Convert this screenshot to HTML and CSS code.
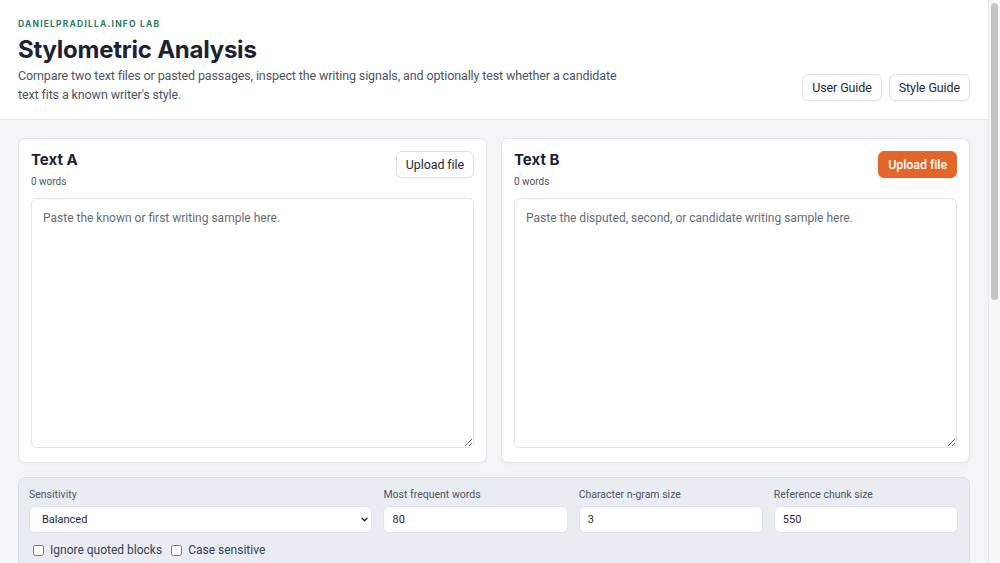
FILE: index.html
```html
<!DOCTYPE html>
<html lang="en">
<head>
<meta charset="utf-8">
<title>Stylometric Analysis</title>
<link rel="stylesheet" href="styles.css">
</head>
<body>
<div class="page">
<header class="top">
  <div class="intro">
    <div class="eyebrow">DANIELPRADILLA.INFO LAB</div>
    <h1 class="title">Stylometric Analysis</h1>
    <p class="lede">Compare two text files or pasted passages, inspect the writing signals, and optionally test whether a candidate text fits a known writer's style.</p>
  </div>
  <nav class="guides">
    <button class="btn">User Guide</button>
    <button class="btn">Style Guide</button>
  </nav>
</header>
<main class="main">
  <section class="texts">
    <div class="card">
      <div class="card-head">
        <div>
          <h2 class="card-title">Text A</h2>
          <div class="count">0 words</div>
        </div>
        <button class="btn">Upload file</button>
      </div>
      <textarea class="sample" placeholder="Paste the known or first writing sample here."></textarea>
    </div>
    <div class="card">
      <div class="card-head">
        <div>
          <h2 class="card-title">Text B</h2>
          <div class="count">0 words</div>
        </div>
        <button class="btn btn-primary">Upload file</button>
      </div>
      <textarea class="sample" placeholder="Paste the disputed, second, or candidate writing sample here."></textarea>
    </div>
  </section>
  <section class="settings">
    <div class="fields">
      <label class="field">
        <span class="label">Sensitivity</span>
        <select class="control select">
          <option>Balanced</option>
          <option>Strict</option>
          <option>Lenient</option>
        </select>
      </label>
      <label class="field">
        <span class="label">Most frequent words</span>
        <input class="control" type="text" value="80">
      </label>
      <label class="field">
        <span class="label">Character n-gram size</span>
        <input class="control" type="text" value="3">
      </label>
      <label class="field">
        <span class="label">Reference chunk size</span>
        <input class="control" type="text" value="550">
      </label>
    </div>
    <div class="checks">
      <label class="check"><input type="checkbox"> Ignore quoted blocks</label>
      <label class="check"><input type="checkbox"> Case sensitive</label>
    </div>
  </section>
</main>
</div>
<div class="scrollbar"><div class="thumb"></div></div>
</body>
</html>
```
FILE: styles.css
```css
html {
  background: #f4f5f7;
}
body {
  margin: 0;
  padding-right: 12px;
  font-family: Roboto, "Liberation Sans", Arial, sans-serif;
  color: #1c2434;
  background: #f4f5f7;
}
.scrollbar {
  position: fixed;
  top: 0;
  right: 0;
  width: 12px;
  height: 100%;
  background: #f8f8f8;
  border-left: 1px solid #e8e8e8;
  box-sizing: border-box;
}
.thumb {
  position: absolute;
  top: 3px;
  left: 2px;
  width: 7px;
  height: 297px;
  border-radius: 4px;
  background: #c4c4c4;
}
.top {
  background: #ffffff;
  border-bottom: 1px solid #e3e6ea;
  display: flex;
  justify-content: space-between;
  align-items: flex-end;
  padding: 18px 18px 15px 18px;
}
.intro {
  max-width: 610px;
}
.eyebrow {
  font-family: Inter, "Liberation Sans", sans-serif;
  font-size: 8.5px;
  font-weight: 700;
  letter-spacing: 0.14em;
  color: #2c7a60;
  line-height: 12px;
}
.title {
  margin: 4px 0 0;
  font-family: Inter, "Liberation Sans", sans-serif;
  font-size: 24px;
  font-weight: 700;
  line-height: 32px;
  letter-spacing: -0.01em;
  color: #1a2234;
}
.lede {
  margin: 0;
  font-size: 12.5px;
  letter-spacing: -0.12px;
  line-height: 19px;
  color: #4b5563;
}
.guides {
  display: flex;
  gap: 7px;
  padding-bottom: 3px;
}
.btn {
  font-family: inherit;
  font-size: 12.5px;
  letter-spacing: -0.1px;
  color: #1f2937;
  background: #ffffff;
  border: 1px solid #dde1e6;
  border-radius: 6px;
  height: 27px;
  padding: 0 9px;
  box-shadow: 0 1px 1px rgba(0,0,0,0.03);
}
.btn-primary {
  background: #e2662a;
  border-color: #e2662a;
  color: #ffffff;
  font-weight: 500;
}
.main {
  padding: 18px;
}
.texts {
  display: grid;
  grid-template-columns: 1fr 1fr;
  gap: 14px;
}
.card {
  background: #ffffff;
  border: 1px solid #e3e6ea;
  border-radius: 7px;
  padding: 12px 12px 14px;
  box-shadow: 0 1px 3px rgba(15, 23, 42, 0.04);
}
.card-head {
  display: flex;
  justify-content: space-between;
  align-items: flex-start;
}
.card-title {
  margin: 0;
  font-family: Inter, "Liberation Sans", sans-serif;
  font-size: 15px;
  font-weight: 700;
  line-height: 18px;
  color: #1a2234;
}
.count {
  margin: 6px 0 0;
  font-size: 10px;
  line-height: 14px;
  color: #4b5563;
}
.sample {
  display: block;
  box-sizing: border-box;
  width: 100%;
  height: 250px;
  margin-top: 9px;
  border: 1px solid #e0e3e8;
  border-radius: 6px;
  padding: 12px 11px;
  font-family: inherit;
  font-size: 12px;
  color: #1f2937;
  resize: vertical;
}
.sample::placeholder {
  color: #666c75;
}
.settings {
  margin-top: 14px;
  background: #e9edf3;
  border: 1px solid #d8dee7;
  border-radius: 7px;
  padding: 10px 11px 14px 10px;
}
.fields {
  display: grid;
  grid-template-columns: 345fr 185fr 185fr 185fr;
  gap: 11px;
}
.field {
  display: flex;
  flex-direction: column;
  gap: 4px;
}
.label {
  font-size: 10.5px;
  line-height: 14px;
  color: #4b5563;
}
.control {
  box-sizing: border-box;
  height: 27px;
  border: 1px solid #e0e4ea;
  border-radius: 6px;
  background: #ffffff;
  font-family: inherit;
  font-size: 11px;
  color: #1f2937;
  padding: 0 8px;
}
.select {
  appearance: none;
  -webkit-appearance: none;
  padding: 0 12px;
  background: #ffffff url("data:image/svg+xml;utf8,<svg xmlns='http://www.w3.org/2000/svg' width='7' height='5' viewBox='0 0 7 5'><path d='M1 1.2l2.5 2.5 2.5-2.5' fill='none' stroke='%23222' stroke-width='1.4' stroke-linecap='round' stroke-linejoin='round'/></svg>") no-repeat right 3px center;
}
.checks {
  display: flex;
  gap: 5px;
  margin-top: 10px;
}
.check {
  display: flex;
  align-items: center;
  gap: 4px;
  font-size: 12px;
  color: #374151;
}
.check input {
  margin: 0 2px 0 4px;
  width: 11px;
  height: 11px;
}
```
